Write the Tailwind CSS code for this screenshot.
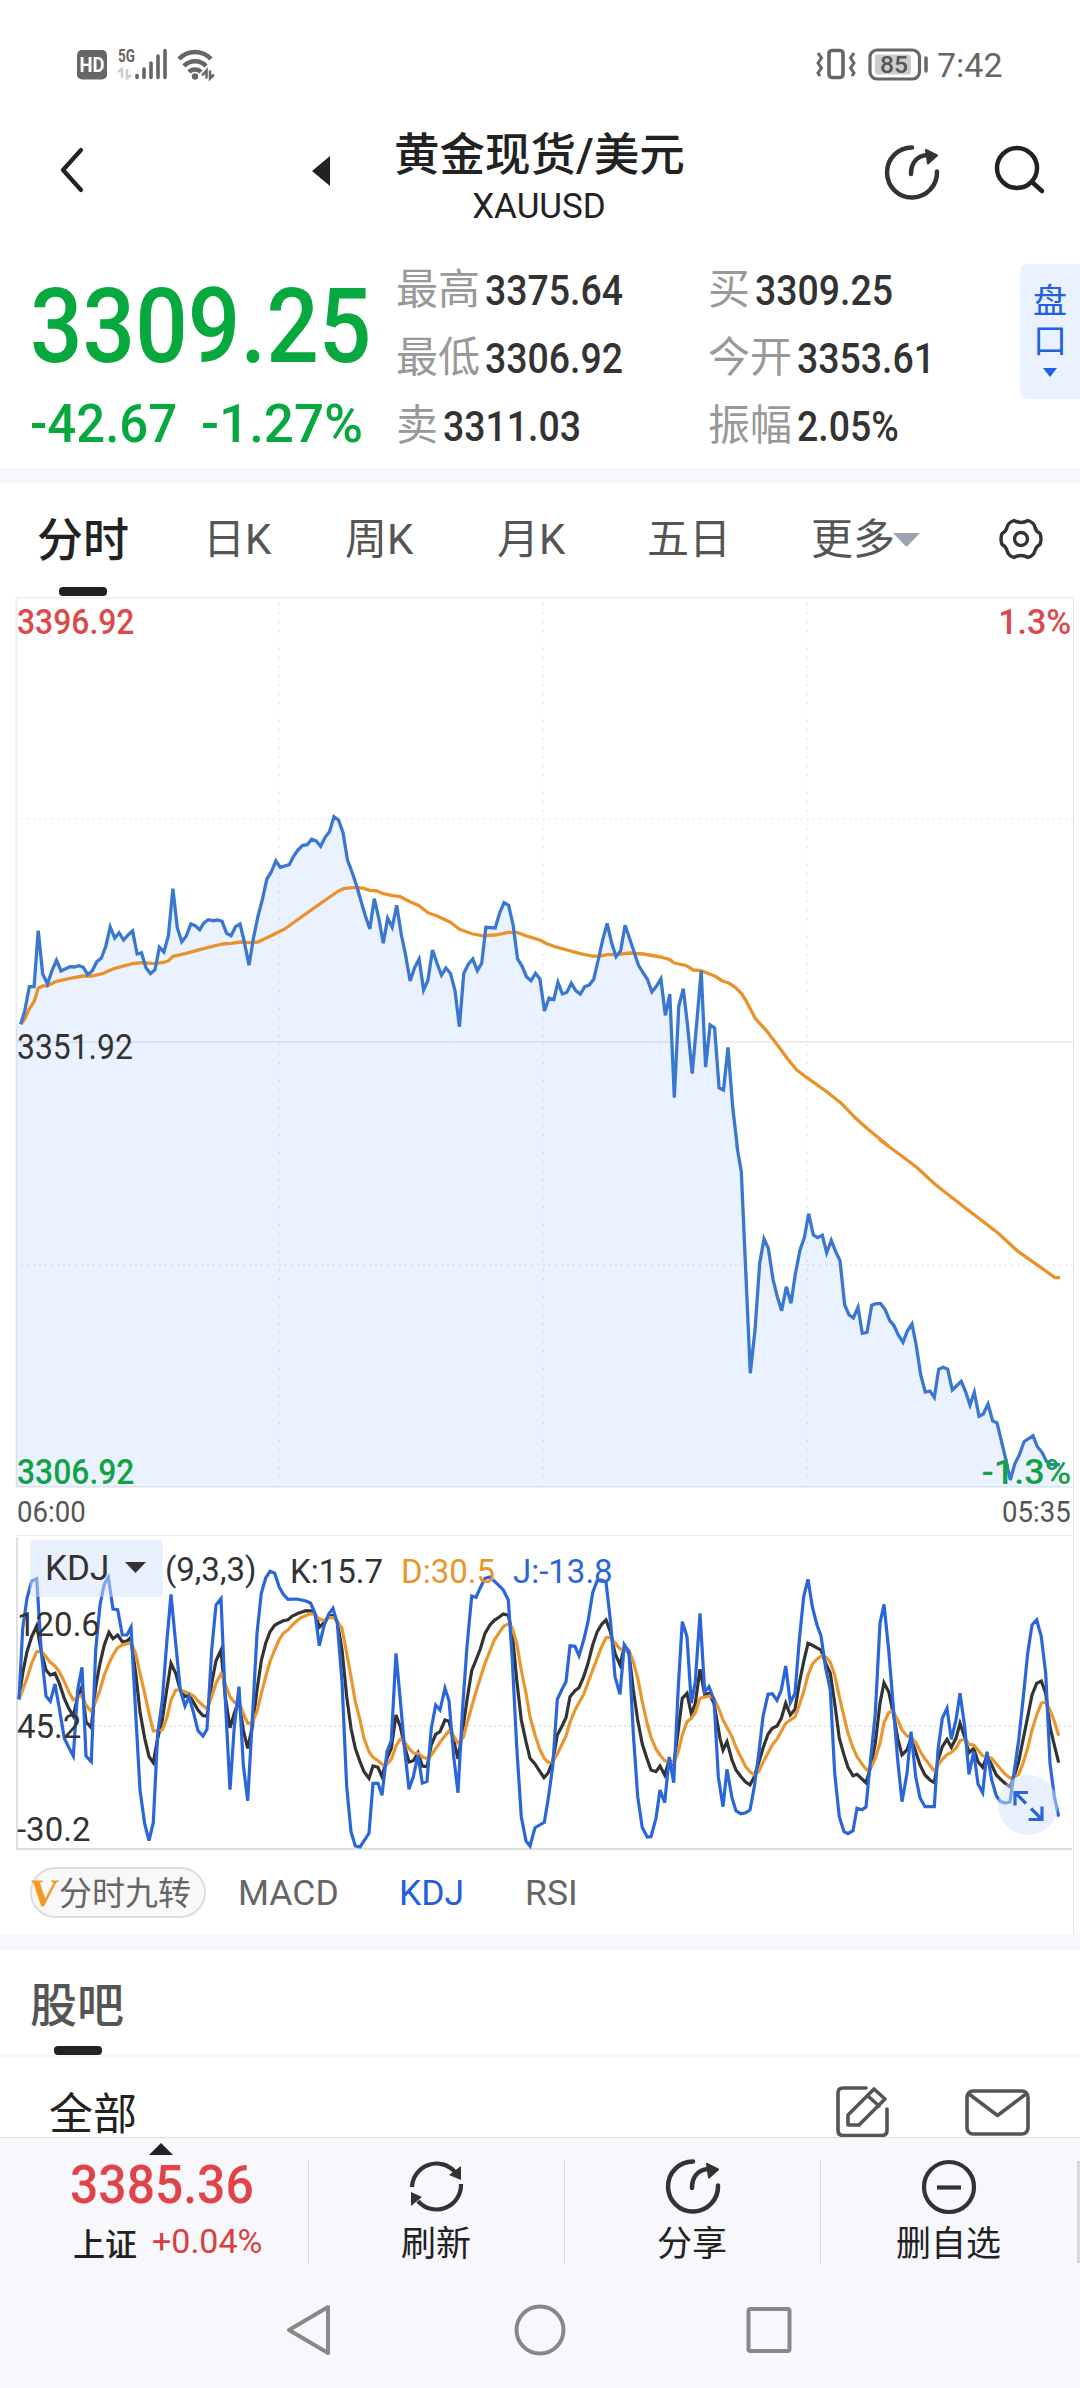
<!DOCTYPE html>
<html lang="zh-Hans">
<head>
    <meta charset="UTF-8">
    <meta name="viewport" content="width=device-width, initial-scale=1.0">
    <title>黄金现货/美元 XAUUSD</title>
    <script src="https://cdn.jsdelivr.net/npm/@tailwindcss/browser@4"></script>
    <style>
        body {
            font-family: Roboto, 'Noto Sans CJK SC', sans-serif;
        }
    </style>
</head>
<body class="w-[1080px] h-[2388px] overflow-hidden bg-white text-[#222] leading-none whitespace-nowrap">

    <!-- 状态栏 -->
    <div class="h-[130px] flex justify-between pl-[76px] pr-[76px] pt-[44px]">
        <svg class="w-[142px] h-[40px]" viewBox="76 44 142 40" fill="none">
            <rect x="77" y="50" width="30" height="29.500" rx="5" fill="#666" />
            <text x="92" y="72" font-size="20" font-weight="700" fill="#fff" text-anchor="middle" textLength="25" lengthAdjust="spacingAndGlyphs">HD</text>
            <text x="118" y="62" font-size="18" font-weight="700" fill="#666" textLength="17" lengthAdjust="spacingAndGlyphs">5G</text>
            <path d="M118 72l4-3v9M127 69v9l4-3" stroke="#ccc" stroke-width="2.500" />
            <path d="M137 75.500v2M144 69v8.500M151 63v14.500M158 56v21.500M165 50.500v27" stroke="#666" stroke-width="3.600" stroke-linecap="round" />
            <path d="M179 59a22 22 0 0 1 32 0M184 66a15 15 0 0 1 22 0M189 72a8.500 8.500 0 0 1 12 0" stroke="#666" stroke-width="4.500" />
            <circle cx="195" cy="76.500" r="3.200" fill="#666" />
            <path d="M202 75.500l4.500-5v8M210 70.500v8l4-4" stroke="#666" stroke-width="2.500" />
        </svg>
        <div class="flex">
            <svg class="w-[120px] h-[40px]" viewBox="814 44 120 40" fill="none" stroke="#666">
                <rect x="829" y="50.500" width="14" height="27" rx="3" stroke-width="3.600" />
                <path d="M818 53l3.500 5-3.500 5 3.500 5-3.500 5 2 3M854 53l-3.500 5 3.500 5-3.500 5 3.500 5-2 3" stroke-width="3" />
                <rect x="870" y="50" width="49.500" height="29" rx="7" stroke-width="3.200" />
                <rect x="875" y="54.500" width="36" height="20" rx="3" fill="#ccc" stroke="none" />
                <path d="M926 58v13" stroke-width="3.500" stroke-linecap="round" />
                <text x="894" y="73" font-size="24" font-weight="500" fill="#555" stroke="none" text-anchor="middle" textLength="28" lengthAdjust="spacingAndGlyphs">85</text>
            </svg>
            <div class="w-[70px] pl-[3px] pt-[4px] text-[34px] text-[#666]">7:42</div>
        </div>
    </div>

    <!-- 标题栏 -->
    <header class="h-[130px] flex items-start">
        <svg class="w-[394px] h-[90px]" viewBox="0 130 394 90" fill="none">
            <path d="M81 150L63 170L81 190" stroke="#222" stroke-width="4.200" stroke-linecap="round" stroke-linejoin="round" />
            <path d="M312 171l18-15v30z" fill="#222" />
        </svg>
        <div class="w-[290px] text-center">
            <h1 class="text-[45.5px] font-medium leading-[50px] pt-px">黄金现货/美元</h1>
            <p class="text-[35px] leading-[50px] pt-px">XAUUSD</p>
        </div>
        <svg class="w-[396px] h-[90px]" viewBox="684 130 396 90" fill="none" stroke="#333" stroke-width="4.500" stroke-linecap="round">
            <path d="M912 147.500a25 25 0 1 0 25 24" />
            <path d="M911 174c0-11 6-18 16-19" />
            <path d="M926 150l11 5.500-9 8z" fill="#333" stroke-width="2" stroke-linejoin="round" />
            <g stroke="#222">
                <circle cx="1017" cy="168" r="20" />
                <path d="M1032 182l10 9" />
            </g>
        </svg>
    </header>

    <!-- 报价 -->
    <section class="h-[208px] flex">
        <div class="w-[396px] pl-[30px] text-[#07a83e] font-medium">
            <div class="h-[100px] mt-[17px] flex items-center">
                <span class="inline-block origin-left scale-x-[0.89] text-[104px]">3309.25</span>
            </div>
            <div class="h-[60px] mt-[17px] flex items-center text-[53px]">
                <span class="w-[171px]"><span class="inline-block origin-left scale-x-[0.96]">-42.67</span></span>
                <span class="inline-block origin-left">-1.27%</span>
            </div>
        </div>
        <div class="w-[624px] h-[204px] grid grid-cols-2 grid-rows-3 -mt-[5px] items-center text-[42px] text-[#999]" id="quotes"></div>
        <div class="w-[60px] h-[135px] mt-[4px] rounded-l-lg bg-[#eaf1ff] text-[#2160e0] text-[34px] flex flex-col items-center pt-[17px]">
            <span class="leading-[40px]">盘</span>
            <span class="leading-[40px]">口</span>
            <svg class="w-[14px] h-[9px] mt-[7px]" viewBox="0 0 14 9" fill="#2160e0"><path d="M0 0h14L7 9z" /></svg>
        </div>
    </section>

    <div class="h-[15px] bg-[#f6f8fe]"></div>

    <!-- 周期切换 -->
    <nav class="h-[114px] flex text-[42px] text-[#555] leading-[114px]">
        <div class="w-[167px] pl-[37px] relative text-[46px] font-medium text-[#222]">分时
            <i class="absolute left-[59px] bottom-px w-[48px] h-[9px] rounded-sm bg-[#222]"></i>
        </div>
        <div class="w-[178px] pl-[36px]">日K</div>
        <div class="w-[152px]">周K</div>
        <div class="w-[150px]">月K</div>
        <div class="w-[164px]">五日</div>
        <div class="w-[180px] flex items-center">更多
            <svg class="w-[27px] h-[14px] -ml-[2px]" viewBox="0 0 27 14" fill="#9aa5b1"><path d="M0 0h27L13.500 14z" /></svg>
        </div>
        <svg class="w-[60px] h-[60px] mt-[26px]" viewBox="991 509 60 60" fill="none" stroke="#333" stroke-width="3.400" stroke-linejoin="round">
            <path d="M1014 520.500q7 4 14 0q6 2 7 7q1 4 5 6q2 5.500 0 11q-4 2-5 6q-1 5-7 7q-7-4-14 0q-6-2-7-7q-1-4-5-6q-2-5.500 0-11q4-2 5-6q1-5 7-7z" />
            <circle cx="1021" cy="539" r="6.500" />
        </svg>
    </nav>

    <!-- 分时图 -->
    <section class="relative h-[938px] text-[35px]">
        <svg class="w-full h-full" viewBox="0 597 1080 938" fill="none">
            <path d="M16 597.500H1073M16.500 597V1487M16 1042H1073M16 1487H1073" stroke="#efeff0" stroke-width="2" />
            <path d="M1073.500 597V1535" stroke="#e6e6e8" />
            <path d="M279 603V1487M543 603V1487M807 603V1487" stroke="#f0f0f2" stroke-width="2" stroke-dasharray="2 7" />
            <path d="M21 819H1073M21 1265H1073" stroke="#f0f0f2" stroke-width="2" stroke-dasharray="2 4" />
            <path id="price-area" fill="#3d87ff" fill-opacity="0.105" />
            <polyline id="average-line" stroke="#ea922a" stroke-width="3.300" stroke-linejoin="round" />
            <polyline id="price-line" stroke="#3a78cf" stroke-width="3.300" />
        </svg>
        <div class="font-medium">
            <span class="absolute left-[17px] top-[8px] origin-left scale-x-[0.91] text-[#d94a4a]">3396.92</span>
            <span class="absolute right-[9px] top-[8px] origin-right scale-x-[0.97] text-[#d94a4a]">1.3%</span>
            <span class="absolute left-[17px] top-[858px] origin-left scale-x-[0.91] text-[#12a245]">3306.92</span>
            <span class="absolute right-[9px] top-[858px] origin-right scale-x-[1.03] text-[#12a245]">-1.3%</span>
        </div>
        <span class="absolute left-[17px] top-[433px] origin-left scale-x-[0.91] text-[#333]">3351.92</span>
        <span class="absolute left-[17px] top-[900px] origin-left scale-x-[0.92] text-[30px] text-[#555]">06:00</span>
        <span class="absolute right-[9px] top-[900px] origin-right scale-x-[0.92] text-[30px] text-[#555]">05:35</span>
    </section>

    <!-- KDJ 指标 -->
    <section class="relative h-[316px] text-[33px] text-[#333]">
        <svg class="w-full h-full" viewBox="0 1535 1080 316" fill="none" stroke-width="3.200">
            <path d="M16 1535.500H1073" stroke="#eee" stroke-width="1" />
            <path d="M1073.500 1535V1851" stroke="#e6e6e8" stroke-width="1" />
            <path d="M17 1537V1849H1072" stroke="#e0e0e2" stroke-width="2" />
            <path d="M34 1726H1073" stroke="#e4e4e6" stroke-width="2" stroke-dasharray="2 3" />
            <polyline id="k-line" stroke="#333" />
            <polyline id="d-line" stroke="#e8962e" stroke-linejoin="round" />
            <polyline id="j-line" stroke="#2a66d9" />
        </svg>
        <button class="absolute left-[30px] top-[5px] w-[133px] h-[57px] rounded-sm bg-[#d5e3fd]/50 flex items-center pl-[15px] text-[35px]">KDJ
            <svg class="w-[21px] h-[11px] ml-[16px] -mt-[2px]" viewBox="0 0 21 11" fill="#333"><path d="M0 0h21L10.500 11z" /></svg>
        </button>
        <span class="absolute left-[165px] top-[18px]">(9,3,3)</span>
        <span class="absolute left-[290px] top-[20px]">K:15.7</span>
        <span class="absolute left-[401px] top-[20px] text-[#e8962e]">D:30.5</span>
        <span class="absolute left-[513px] top-[20px] text-[#2a66d9]">J:-13.8</span>
        <span class="absolute left-[17px] top-[73px]">120.6</span>
        <span class="absolute left-[17px] top-[175px]">45.2</span>
        <span class="absolute left-[17px] top-[278px]">-30.2</span>
        <svg class="absolute left-[998px] top-[240px] w-[60px] h-[60px]" viewBox="998 1775 60 60" fill="none" stroke="#2a66d9" stroke-width="3.200">
            <circle cx="1028" cy="1805" r="30" fill="#d5e3fd" fill-opacity="0.500" stroke="none" />
            <path d="M1028 1792.500H1015V1805.500M1015 1792.500L1026 1803.500M1028.500 1819.500H1042V1806.500M1042 1819.500L1031 1808.500" />
        </svg>
    </section>

    <!-- 指标选择 -->
    <div class="h-[83px] flex items-center w-[1074px] border-r border-[#e6e6e8] text-[35.5px] text-[#666]">
        <div class="ml-[30px] w-[176px] h-[51px] rounded-full border-2 border-[#ddd] bg-[#f8f8f8] flex items-center text-[33px]">
            <b class="w-[29px] -ml-[2px] -skew-x-6 font-['Liberation_Serif'] text-[39px] text-[#f39a1e]">V</b><span class="pt-[2px]">分时九转</span>
        </div>
        <span class="ml-[32px] w-[161px] pt-[2px]">MACD</span>
        <span class="w-[126px] pt-[2px] text-[#2160d8]">KDJ</span>
        <span class="pt-[2px]">RSI</span>
    </div>

    <div class="h-[16px] bg-[#f6f8fe]"></div>

    <!-- 股吧 -->
    <div class="relative h-[108px] pl-[30px] border-b-3 border-[#f6f8fe] text-[47px] font-medium text-[#555] leading-[111px]">股吧
        <i class="absolute left-[54px] bottom-0 w-[48px] h-[9px] rounded-sm bg-[#222]"></i>
    </div>
    <div class="h-[79px] pl-[49px] flex">
        <span class="w-[779px] text-[44px] leading-[115px]">全部</span>
        <svg class="w-[210px] h-[79px]" viewBox="830 2058 210 79" fill="none" stroke="#555" stroke-width="3.600" stroke-linecap="round" stroke-linejoin="round">
            <path d="M868 2088H845q-5 0-5 5V2130q0 5.500 5 5.500H884q5 0 5-5.500V2109" />
            <path d="M850 2125V2115L876 2089L887 2099L861 2125ZM870 2096L881 2106" />
            <rect x="969" y="2091" width="61" height="43" rx="6" />
            <path d="M971 2094L999.500 2115.500L1028 2094" />
        </svg>
    </div>

    <!-- 底部工具栏 -->
    <footer class="relative h-[251px] border-t border-[#dedee2] bg-[#f7f7fc]">
        <div class="h-[127px] flex">
            <div class="relative w-[308px] pt-[21px]">
                <svg class="absolute left-[149px] top-[5px] w-[24px] h-[12px]" viewBox="0 0 24 12" fill="#222"><path d="M0 12L12 0L24 12z" /></svg>
                <div class="pl-[70px] h-[54px]"><span class="inline-block origin-left scale-x-[0.94] text-[53px] font-medium text-[#e04447]">3385.36</span></div>
                <div class="pl-[73px] flex items-center h-[60px]">
                    <span class="w-[79px] text-[32px] font-medium pt-[4px]">上证</span>
                    <span class="inline-block origin-left text-[34px] text-[#d93f3f] pb-[4px]">+0.04%</span>
                </div>
            </div>
            <div class="flex mt-[23px] h-[102px] w-[772px] text-center text-[35px]">
                <div class="w-[256px] border-l border-[#d8d8dc]">
                    <svg class="block mx-auto w-[60px] h-[60px] -mt-[5px]" viewBox="407 2156 60 60" fill="none" stroke="#333" stroke-width="4.200">
                        <path d="M412 2187a24.500 24.500 0 0 1 43-15M461 2184a24.500 24.500 0 0 1-43 17" />
                        <path d="M449 2175l12-9v14zM411 2192v14l11-9z" fill="#333" stroke="none" />
                    </svg>
                    <div class="leading-[57px] -ml-px">刷新</div>
                </div>
                <div class="w-[256px] border-l border-[#d8d8dc]">
                    <svg class="block mx-auto w-[60px] h-[60px] -mt-[5px]" viewBox="882 142 60 60" fill="none" stroke="#333" stroke-width="4.500" stroke-linecap="round">
                        <path d="M912 147.500a25 25 0 1 0 25 24" />
                        <path d="M911 174c0-11 6-18 16-19" />
                        <path d="M926 150l11 5.500-9 8z" fill="#333" stroke-width="2" stroke-linejoin="round" />
                    </svg>
                    <div class="leading-[57px] -ml-px">分享</div>
                </div>
                <div class="w-[260px] border-l border-r-3 border-[#d8d8dc]">
                    <svg class="block mx-auto w-[60px] h-[60px] -mt-[5px]" viewBox="0 0 60 60" fill="none" stroke="#333" stroke-width="4.200">
                        <circle cx="30" cy="31" r="25" />
                        <path d="M18 31.500h24" />
                    </svg>
                    <div class="leading-[57px] -ml-px">删自选</div>
                </div>
            </div>
        </div>
        <!-- 系统导航键 -->
        <svg class="w-full h-[123px]" viewBox="0 2265 1080 123" fill="none" stroke="#888" stroke-width="4" stroke-linejoin="round">
            <path d="M289 2330L328 2307V2353z" />
            <circle cx="540" cy="2330" r="23.500" />
            <rect x="748.500" y="2309" width="41" height="42" rx="2" />
        </svg>
    </footer>

    <script>
        // 报价数据
        const quotes = [
            ['最高', '3375.64'], ['买', '3309.25'],
            ['最低', '3306.92'], ['今开', '3353.61'],
            ['卖', '3311.03'], ['振幅', '2.05%']
        ];
        document.getElementById('quotes').innerHTML = quotes.map(([label, value]) => `
            <div class="flex items-center">
                <span class="pt-[2px]">${label}</span>
                <span class="inline-block origin-left scale-x-[0.87] ml-[5px] mt-[3px] text-[43px] font-medium text-[#333]">${value}</span>
            </div>
        `).join('');

        // 每段: [x 起点, y 起点, x 缩放, 坐标串]
        const price = [
            [0, 780, 2.904, '60,733 72,692 85,620 99,620 111,452 124,582 138,612 151,572 164,541 177,573 203,560 215,561 229,557 242,562 255,584 268,572 281,545 294,535 307,500 320,441 333,474 346,458 359,480 372,465 385,453 398,522 411,518 424,563 437,581 450,569 463,502 476,516 489,467 502,326 515,443 528,485 541,468 554,432 567,437 580,449 592,429 605,419 619,422 632,420 645,424 658,460 671,467 684,440 697,432 709,482 723,556 736,475 749,410 762,358 775,297 788,276 801,243 814,262 840,254 853,228 866,209 879,196 892,194 905,178 918,183 931,199 944,172 957,155 970,110 983,120 996,158 1009,240 1022,275 1036,318 1048,362 1061,408 1074,447 1087,356 1100,415 1113,490 1126,415 1139,442 1152,376 1165,462 1178,525 1191,603 1204,563 1217,537 1230,630 1243,600 1256,510 1269,550 1282,586 1295,564 1308,580 1321,630 1334,740 1347,580 1360,553 1373,537 1386,572 1399,550 1411,442 1438,444 1451,398 1464,368 1477,376 1490,435 1503,537 1516,558 1529,590 1542,602 1555,580 1568,597'],
            [540, 860, 2.904, '13,453 26,414 40,419 52,367 65,402 78,397 91,370 104,392 117,402 130,380 143,375 156,358 169,300 182,240 195,190 208,248 221,290 234,272 247,196 260,235 273,275 286,316 299,338 312,358 325,396 338,379 351,357 364,466 377,402 390,713 403,438 416,386 429,500 442,641 455,490 468,333 481,621 494,495 507,504 520,684 533,690 546,562 560,745 573,860'],
            [680, 1140, 3, '171,20 184,95 198,410 211,700 225,570 239,370 252,297 265,325 279,418 292,470 305,512 319,440 333,490 346,403 360,330 373,293 386,221 400,285 413,293 427,286 440,338 454,301 467,335 480,362 494,495 507,524 520,534 534,502 547,580 561,577 575,496 588,491 602,491 615,508 629,541 642,557 655,585 669,607 682,573 696,552 709,617 722,705 736,756 750,753 763,772 776,688 789,682 803,688 817,750 830,737 844,724 857,756 870,795 883,757 897,829 910,822 924,792 938,843 951,848 964,902 978,960 991,1020 1004,972 1018,945 1032,905 1059,887 1072,920 1086,937 1100,965 1113,974 1140,974']
        ];
        const average = [
            [0, 780, 2.904, '60,733 72,716 85,687 99,665 111,625 124,618 138,617 164,604 203,595 242,588 268,588 300,580 333,565 385,551 411,548 450,551 476,547 490,542 502,529 541,520 580,509 645,492 671,490 700,486 723,488 749,486 775,473 827,447 879,408 931,370 983,333 1000,325 1035,322 1055,325 1074,331 1095,333 1113,341 1139,347 1160,349 1191,365 1217,377 1243,398 1269,408 1308,427 1334,448 1373,462 1400,467 1440,465 1477,457 1500,457 1535,470 1568,480'],
            [540, 860, 2.904, '20,251 40,259 78,270 117,281 150,288 169,289 195,284 221,284 260,279 299,282 351,291 377,299 390,309 425,317 445,330 468,332 507,348 530,363 550,370 568,383 585,400 600,425 625,475 660,515 690,556 720,598 745,629 775,653 830,693 875,730 915,773 955,810 1010,856'],
            [680, 1140, 3, '600,0 665,48 710,82 765,133 860,207 955,280 1015,335 1075,377 1125,413 1140,413']
        ];
        const kSeries = [
            [0, 1500, 3, '57,598 68,520 81,455 95,410 110,378 124,455 138,510 151,525 165,520 178,550 193,595 206,625 220,648 233,590 246,560 258,665 274,683 287,560 300,490 313,435 327,397 339,416 353,405 367,425 381,423 392,413 407,520 420,635 434,715 447,770 460,788 473,715 487,660 500,570 513,490 527,520 541,570 555,590 567,586 581,608 594,630 609,647 621,648 635,550 648,482 663,450 676,590 690,683 703,640 717,600 730,690 743,745 757,680 771,570 784,482 797,430 810,395 824,376 838,368 850,362 864,359 877,348 895,340 918,332 938,333 947,345 958,382 972,368 986,350 999,346 1012,365 1026,450 1040,590 1053,685 1066,745'],
            [360, 1500, 3, '0,785 12,815 27,835 39,798 54,802 66,830 81,775 94,745 108,645 121,680 134,740 147,786 160,782 174,758 187,798 201,800 214,735 227,703 240,695 255,660 267,664 281,720 294,777 308,690 321,600 335,512 348,480 361,447 375,400 390,375 403,361 417,352 430,342 445,346 457,400 470,540 484,660 498,725 510,775 525,792 538,812 552,833 565,818 578,785 592,705 605,680 618,653 630,590 645,572 657,563 671,530 684,490 698,435 711,397 725,373 738,360 752,398 765,460 780,495 793,440 807,460 820,570 833,660 847,732 860,773 873,810 888,815 900,798 914,825 928,780 941,795 955,690 967,595 981,580 994,642 1006,610 1020,508 1034,583 1047,580 1062,610'],
            [720, 1500, 3, '0,715 9,750 21,725 36,780 48,810 63,830 77,846 90,855 103,830 117,785 129,745 144,703 157,685 171,678 184,655 197,610 211,645 225,628 238,550 251,485 264,430 277,436 303,450 317,490 331,520 344,610 358,715 372,765 384,802 399,827 411,823 426,837 438,848 452,800 466,730 480,610 492,548 506,575 520,640 533,715 546,765 561,750 573,715 587,755 600,795 615,825 630,840 643,848 654,780 667,740 681,718 694,742 708,715 720,670 734,712 747,758 761,745 774,785 788,802 801,768 815,795 829,825 841,837 855,850 870,860 882,830 896,785 909,720 923,650 936,585 950,550 964,543 977,580 990,680 1003,735 1016,788']
        ];
        const dSeries = [
            [0, 1500, 3, '57,598 68,570 81,535 95,490 110,455 124,455 138,470 151,487 165,498 178,515 193,545 206,575 220,600 233,592 246,585 258,615 274,635 287,605 300,570 313,525 327,490 339,465 353,443 367,435 381,431 393,428 407,460 420,520 434,580 447,640 460,693 487,690 500,655 513,600 527,570 541,570 567,580 581,588 594,603 621,627 635,590 648,550 664,520 676,553 690,590 703,607 717,605 730,640 743,670 757,668 771,635 784,580 797,530 810,485 824,450 838,418 850,400 864,390 877,375 890,363 905,352 930,342 945,342 955,355 970,362 986,353 1005,353 1012,365 1026,385 1040,460 1053,530 1066,605'],
            [360, 1500, 3, '0,660 12,715 27,755 39,772 54,782 70,796 81,793 94,778 108,738 121,717 134,727 147,745 160,759 174,760 187,770 204,778 214,765 240,727 267,692 281,708 294,730 310,712 321,670 348,575 375,490 403,420 430,380 447,370 457,385 470,430 484,510 498,580 510,650 525,705 540,750 553,775 565,787 578,786 592,762 618,708 630,667 645,630 671,583 698,510 725,440 738,413 752,412 765,428 780,447 807,452 820,485 833,535 847,605 860,665 873,712 888,747 900,765 914,782 941,790 955,755 967,705 981,665 994,655 1006,638 1020,595 1047,588 1062,595'],
            [720, 1500, 3, '0,635 9,660 36,710 48,742 77,800 90,815 103,825 117,813 129,787 157,735 171,717 197,670 225,650 238,615 251,575 264,525 277,493 291,477 305,467 318,472 331,487 344,525 358,590 372,650 384,700 399,743 411,770 426,792 440,810 452,805 466,775 480,730 492,668 506,638 518,632 533,660 546,690 561,708 573,712 587,727 600,753 615,777 643,813 654,795 667,778 681,764 694,757 708,745 720,722 735,716 747,733 761,735 788,767 815,775 829,792 855,822 870,834 882,831 896,823 909,790 923,745 936,690 950,645 964,610 977,605 990,630 1003,663 1016,707']
        ];
        const jSeries = [
            [0, 1500, 3, '57,598 68,385 81,295 95,243 110,236 124,455 138,588 151,604 165,552 178,625 193,715 206,742 220,768 233,570 246,502 258,768 274,785 287,450 300,315 313,252 325,232 339,327 353,329 367,405 381,405 393,382 407,640 420,870 434,972 447,1022 460,968 473,700 487,600 500,430 513,283 527,430 541,570 555,618 567,590 581,640 594,692 609,708 621,688 635,450 648,315 663,296 676,600 690,869 703,680 717,560 730,795 743,902 757,660 771,400 784,280 797,234 810,214 824,220 838,262 850,283 864,298 890,297 918,303 932,310 945,340 958,437 972,378 986,342 999,325 1012,370 1026,545 1040,860 1053,995 1066,1038'],
            [360, 1500, 3, '0,1041 27,1000 39,850 54,850 66,886 81,755 94,722 108,460 121,600 134,750 147,868 160,830 174,765 187,849 201,844 214,685 227,615 240,630 255,565 267,602 281,770 294,878 308,620 321,440 335,288 348,292 361,263 375,235 390,231 410,250 430,270 445,300 457,480 470,740 484,950 498,1023 510,1038 525,983 553,967 565,895 578,800 592,598 605,570 618,545 630,437 645,439 657,467 671,420 684,365 698,278 711,243 725,240 738,246 752,370 765,530 780,583 793,434 807,455 820,700 833,890 847,983 862,1011 873,1010 888,955 900,870 914,908 928,771 941,848 955,560 967,365 981,410 994,610 1006,545 1020,340 1034,575 1047,560 1062,600 1075,830'],
            [720, 1500, 3, '9,920 21,808 36,893 48,933 63,941 77,938 90,930 103,860 117,755 129,650 144,583 157,581 171,601 184,570 197,498 211,608 225,580 238,420 251,290 264,238 277,320 291,375 303,408 317,505 331,570 344,820 358,950 372,995 384,1001 399,992 411,925 426,929 438,921 452,775 466,640 480,370 492,313 506,450 520,620 533,780 546,905 561,820 573,695 587,830 600,893 615,920 643,920 654,750 667,655 681,625 694,718 708,660 720,580 734,680 747,823 761,755 774,852 788,878 801,755 815,840 829,887 841,904 855,909 870,906 882,820 896,720 909,600 923,460 936,375 950,360 964,410 977,520 990,790 1003,890 1016,950']
        ];

        function toPoints(segments) {
            return segments.map(([x0, y0, scale, data]) => data.split(' ').map(pair => {
                const [x, y] = pair.split(',').map(Number);
                return `${(x0 + x / scale).toFixed(1)},${(y0 + y / 3).toFixed(1)}`;
            }).join(' ')).join(' ');
        }

        // 绘制曲线
        const lines = { 'price-line': price, 'average-line': average, 'k-line': kSeries, 'd-line': dSeries, 'j-line': jSeries };
        Object.entries(lines).forEach(([id, segments]) => {
            document.getElementById(id).setAttribute('points', toPoints(segments));
        });
        document.getElementById('price-area').setAttribute('d', `M16,1487 L16,1024 L${toPoints(price)} L1060,1487 Z`);
    </script>
</body>
</html>
